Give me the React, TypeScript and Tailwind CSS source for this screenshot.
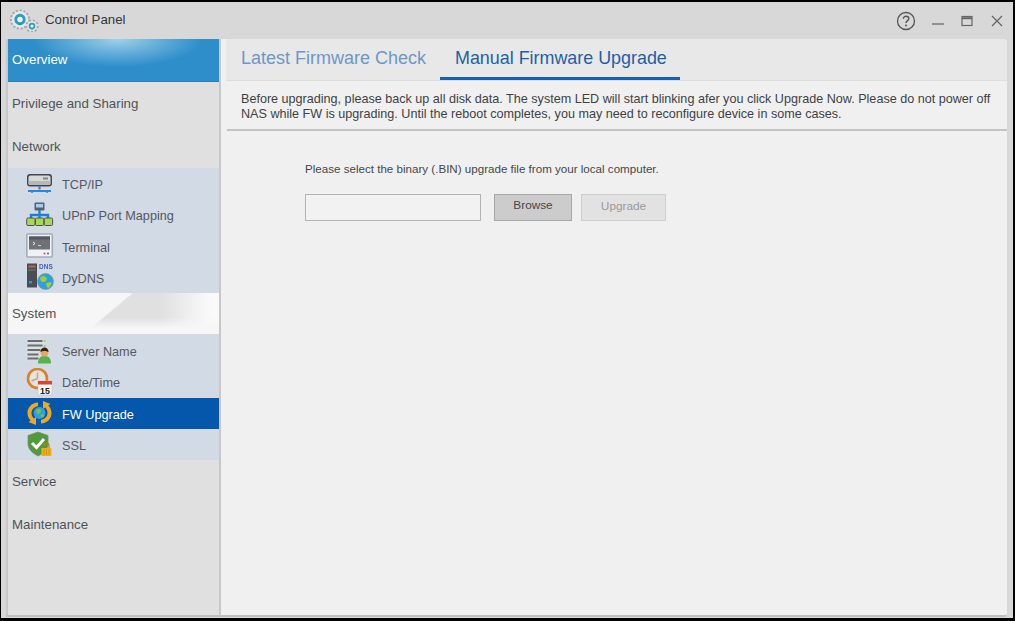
import React from "react";

const Gear = ({ cx, cy, r, hole }: { cx: number; cy: number; r: number; hole: number }) => (
  <g>
    <circle cx={cx} cy={cy} r={r} fill="#d8dadc" stroke="#a4a7aa" strokeWidth="2.2" strokeDasharray="2 1.8" />
    <circle cx={cx} cy={cy} r={r - 0.8} fill="#e6e8ea" />
    <circle cx={cx} cy={cy} r={hole} fill="#eef4f7" stroke="#2a9fc4" strokeWidth={hole * 0.7} />
    <circle cx={cx} cy={cy + hole + 0.6} r={hole * 0.25} fill="#4a5660" opacity="0.35" />
  </g>
);

const LogoIcon = () => (
  <svg width="30" height="24" viewBox="0 0 30 24" className="blur-[0.5px]">
    <Gear cx={11} cy={11.5} r={9} hole={4.2} />
    <Gear cx={23} cy={18} r={5.6} hole={2.5} />
  </svg>
);

const TcpIcon = () => (
  <svg width="28" height="26" viewBox="0 0 28 26" className="blur-[0.6px]">
    <rect x="1" y="3" width="25" height="12.5" rx="3" fill="#44484c" />
    <rect x="2.500" y="4.5" width="22" height="9.5" rx="2" fill="#d6d9d6" />
    <rect x="2.500" y="10" width="22" height="4" rx="1.5" fill="#b4b8b6" />
    <rect x="17" y="6.5" width="5" height="2" fill="#7f8488" />
    <path d="M13.5 15.5v3M2 20h23" stroke="#2f86d6" strokeWidth="2.2" />
    <path d="M6 20v2M21 20v2" stroke="#2f86d6" strokeWidth="1.5" />
  </svg>
);

const UpnpIcon = () => (
  <svg width="28" height="26" viewBox="0 0 28 26" className="blur-[0.6px]">
    <rect x="8.5" y="0.5" width="10" height="8" rx="1" fill="#5a6068" />
    <rect x="10" y="2" width="7" height="3.5" fill="#9fd0f0" />
    <path d="M13.5 8v5M5 17v-4h17v4M13.5 13v4" stroke="#1f7fd8" strokeWidth="2.4" fill="none" />
    <rect x="0.7" y="16" width="8.3" height="7.5" rx="1.2" fill="#a8d850" stroke="#4d5358" />
    <rect x="9.5" y="16" width="8.3" height="7.5" rx="1.2" fill="#a8d850" stroke="#4d5358" />
    <rect x="18.3" y="16" width="8.3" height="7.5" rx="1.2" fill="#a8d850" stroke="#4d5358" />
  </svg>
);

const TerminalIcon = () => (
  <svg width="28" height="26" viewBox="0 0 28 26" className="blur-[0.5px]">
    <rect x="0.8" y="1" width="25.5" height="23" rx="1" fill="#eef1f5" stroke="#a4acb8" strokeWidth="1.6" />
    <rect x="3" y="3.5" width="21" height="13" fill="#6e7276" />
    <rect x="3" y="3.5" width="21" height="3" fill="#54585c" />
    <path d="M7 9l2 1.5L7 12" stroke="#fff" strokeWidth="0.9" fill="none" />
    <path d="M12 12.5h3" stroke="#ddd" strokeWidth="0.9" />
    <circle cx="18.5" cy="20.5" r="1" fill="#d84a4a" />
    <circle cx="22" cy="20.500" r="1" fill="#3a62b8" />
  </svg>
);

const DnsIcon = () => (
  <svg width="28" height="28" viewBox="0 0 28 28" className="blur-[0.4px]">
    <rect x="1" y="0.5" width="10" height="24" fill="#4a4d52" />
    <rect x="2.5" y="2.5" width="7" height="2" fill="#b07050" />
    <rect x="2.5" y="6.5" width="7" height="1" fill="#7a7d82" />
    <rect x="3" y="18" width="3" height="2.5" fill="#2a9ae0" />
    <text x="13" y="6" fontSize="6.5" fontWeight="700" fill="#3a62c0" fontFamily="Liberation Sans, sans-serif">DNS</text>
    <circle cx="19.5" cy="18.5" r="8" fill="#2f9fe0" stroke="#8a9a9a" strokeWidth="0.8" />
    <path d="M14.5 14c3-2 5-1 6 1s-1 4-3 4-4-2-3-5zM20.5 20c2-1 5-1 5 0s-2 5-3 5-3-3-2-5z" fill="#9ccf3a" />
  </svg>
);

const ServerNameIcon = () => (
  <svg width="28" height="26" viewBox="0 0 28 26" className="blur-[0.4px]">
    <rect x="1" y="0.5" width="18" height="22" fill="#dcdfe2" />
    <path d="M1.5 3h15M1.5 7.5h15M1.5 12h13M1.500 16.5h11M1.5 20.5h11" stroke="#6a6e74" strokeWidth="1.8" />
    <circle cx="18.5" cy="3" r="1" fill="#8ccf60" />
    <circle cx="18.5" cy="8" r="1" fill="#8ccf60" />
    <path d="M12 25.5c0-5 2-7.500 6.500-7.500s6.500 2.500 6.500 7.500z" fill="#5ab04a" />
    <circle cx="18.5" cy="14.5" r="4" fill="#e8a868" />
    <path d="M14.5 14c0-3 2-4.500 4-4.500s4 1.500 4 4.500c-2-1.500-6-1.500-8 0z" fill="#3a1e10" />
  </svg>
);

const DateIcon = () => (
  <svg width="28" height="28" viewBox="0 0 28 28" className="blur-[0.4px]">
    <circle cx="11.5" cy="10.5" r="9.5" fill="#e8e4dc" stroke="#d9822b" strokeWidth="2.6" />
    <path d="M11.5 10.5V4.5M11.5 10.5l-6 2.5" stroke="#b4aca0" strokeWidth="1.6" />
    <rect x="12" y="13" width="14" height="14" fill="#f4f4f4" stroke="#bbb" strokeWidth="0.5" />
    <rect x="12" y="13" width="14" height="3.5" fill="#d8443a" />
    <text x="14" y="25.5" fontSize="9" fontWeight="700" fill="#222" fontFamily="Liberation Sans, sans-serif">15</text>
  </svg>
);

const FwIcon = () => (
  <svg width="28" height="26" viewBox="0 0 28 26" className="blur-[0.4px]">
    <path d="M12 2.500C5.500 3 1.500 7.500 1.500 13c0 3 1.300 5.800 3.200 7.600L2.500 22l7.500 3v-8l-2.200 1.500C6.300 17 5.500 15 5.500 13c0-3.500 2.800-6.200 6.500-6.700z" fill="#f0a820" />
    <path d="M15 23.500c6.500-.5 10.500-5 10.500-10.500 0-3-1.300-5.800-3.200-7.600L24.500 4 17 1v8l2.200-1.500c1.500 1.500 2.300 3.500 2.300 5.500 0 3.500-2.800 6.200-6.500 6.700z" fill="#f0a820" />
    <circle cx="13.5" cy="13" r="6" fill="#2f9fe0" />
    <path d="M10.500 9.500c2-1 4.500-1 4.500 1s-2 3.500-3 3.500-2.500-2.500-1.500-4.500zM14.500 15c1-1 3.500-1 3.500 0s-1 2.500-2 2.500-1.500-1.500-1.500-2.500z" fill="#7cc04a" />
  </svg>
);

const SslIcon = () => (
  <svg width="28" height="26" viewBox="0 0 28 26" className="blur-[0.4px]">
    <path d="M12 1l10 3.500v8c0 6-5 10-10 12.500C7 22.500 2 18.500 2 12.500v-8z" fill="#4f9a3a" stroke="#7d8a80" strokeWidth="0.8" />
    <path d="M6 12l4.500 4.500L18 8" stroke="#fff" strokeWidth="3" fill="none" />
    <path d="M18 17v-2.500a2.500 2.500 0 015 0V17" stroke="#b08020" strokeWidth="1.2" fill="none" />
    <rect x="15.5" y="17" width="10" height="8" fill="#efb020" />
    <path d="M18 18v6M20.500 18v6M23 18v6" stroke="#c98a10" strokeWidth="0.7" />
  </svg>
);

const Section = ({ label }: { label: string }) => (
  <div className="h-[43px] flex items-center pl-[4px] text-[13.3px] text-[#505458]">{label}</div>
);

const SubItem = ({ icon, label, active = false }: { icon: React.ReactNode; label: string; active?: boolean }) => (
  <div className={`h-[31.25px] flex items-center text-[12.7px] ${active ? "bg-[#0457ab] text-white" : "text-[#55595f]"}`}>
    <div className="w-[54px] pl-[18px] flex items-center justify-start h-full">{icon}</div>
    <span className="pt-[4px]">{label}</span>
  </div>
);

export default function App() {
  return (
    <div className="w-[1015px] h-[621px] bg-[#000] pt-[2px] pl-[1px] pr-[2px] pb-[3px] overflow-hidden" style={{ fontFamily: '"Liberation Sans", Arial, sans-serif' }}>
      <div className="h-full flex flex-col bg-[#d8d8d8]">
        <div className="h-[36px] shrink-0 flex items-center pl-[8px] pr-[9px]">
          <LogoIcon />
          <span className="ml-[6px] text-[13.3px] text-[#33363a]">Control Panel</span>
          <div className="ml-auto flex items-center text-[#4a4a4a] pt-[2px]">
            <svg width="20" height="20" viewBox="0 0 20 20" className="mr-[15px]">
              <circle cx="10" cy="10" r="8.5" fill="none" stroke="#555" strokeWidth="1.3" />
              <path d="M7.3 7.800c0-1.600 1.200-2.600 2.800-2.600s2.700 1 2.700 2.300c0 2.300-2.800 2-2.800 4.500" fill="none" stroke="#555" strokeWidth="1.4" />
              <circle cx="10" cy="14.5" r="1" fill="#555" />
            </svg>
            <svg width="14" height="14" viewBox="0 0 14 14" className="mr-[15px]">
              <path d="M1 10h12" stroke="#777" strokeWidth="1.5" />
            </svg>
            <svg width="14" height="14" viewBox="0 0 14 14" className="mr-[16px]">
              <rect x="2" y="2.5" width="10" height="9" fill="none" stroke="#666" strokeWidth="1.2" />
              <path d="M2 4.200h10" stroke="#666" strokeWidth="2" />
            </svg>
            <svg width="14" height="14" viewBox="0 0 14 14">
              <path d="M2 2l10 10M12 2L2 12" stroke="#666" strokeWidth="1.3" />
            </svg>
          </div>
        </div>
        <div className="flex-1 min-h-0 flex ml-[5px] mr-[6px] mb-[1px] mt-[1px] rounded-tr-[3px] rounded-br-[3px] overflow-hidden border-b-2 border-[#c0c0c0]">
          <aside className="w-[215px] shrink-0 flex flex-col bg-[#e0e0e0] border-l-2 border-r-2 border-[#c8c8c8]">
            <div className="h-[43px] flex items-center pl-[4px] text-[13.3px] text-white bg-[#2e8ec9] bg-[radial-gradient(ellipse_85px_28px_at_52%_0,#a2d0e8_0%,#5eabd8_55%,#2e8ec9_100%)] border-b border-[#2a7eb4]">Overview</div>
            <Section label="Privilege and Sharing" />
            <Section label="Network" />
            <div className="bg-[#d2dae6]">
              <SubItem icon={<TcpIcon />} label="TCP/IP" />
              <SubItem icon={<UpnpIcon />} label="UPnP Port Mapping" />
              <SubItem icon={<TerminalIcon />} label="Terminal" />
              <SubItem icon={<DnsIcon />} label="DyDNS" />
            </div>
            <div className="h-[42px] flex items-center pl-[4px] text-[13.3px] text-[#505458] bg-[linear-gradient(to_bottom,transparent_60%,#f6f6f6_85%),linear-gradient(to_right,transparent_72%,#fafafa_96%),linear-gradient(140deg,#f6f6f6_47.5%,#e0e0e0_48.5%)] border-b border-[#d8d8d8]">System</div>
            <div className="bg-[#d2dae6]">
              <SubItem icon={<ServerNameIcon />} label="Server Name" />
              <SubItem icon={<DateIcon />} label="Date/Time" />
              <SubItem icon={<FwIcon />} label="FW Upgrade" active />
              <SubItem icon={<SslIcon />} label="SSL" />
            </div>
            <Section label="Service" />
            <Section label="Maintenance" />
          </aside>
          <main className="flex-1 min-w-0 bg-[#f0f0f0] flex flex-col">
            <div className="h-[42px] shrink-0 bg-[#e8e8e8] ml-[5px] flex items-end border-b border-[#dedede]">
              <div className="h-full w-[214px] pl-[15px] pt-[6px] text-[18px] text-[#6d97c8]">Latest Firmware Check</div>
              <div className="h-[42px] w-[240px] pl-[15px] pt-[7px] text-[17.9px] text-[#1d5fa8] border-b-[3px] border-[#1560b0]">Manual Firmware Upgrade</div>
            </div>
            <div className="h-[50px] shrink-0 ml-[6px] pl-[14px] pt-[11px] text-[12.6px] leading-[14.5px] text-[#3e4246] border-b-2 border-[#c4c4c4]">
              Before upgrading, please back up all disk data. The system LED will start blinking afer you click Upgrade Now. Please do not power off
              <br />
              NAS while FW is upgrading. Until the reboot completes, you may need to reconfigure device in some cases.
            </div>
            <div className="pl-[84px] pt-[31px]">
              <div className="text-[11.6px] leading-[14px] text-[#44484c]">Please select the binary (.BIN) upgrade file from your local computer.</div>
              <div className="flex mt-[18px] items-stretch h-[27px]">
                <div className="w-[176px] bg-[#f2f2f2] border border-[#b4b4b4]" />
                <button className="ml-[13px] w-[78px] bg-[#cccccc] border border-[#a8a8a8] pb-[3px] text-[11.8px] text-[#44484c]">Browse</button>
                <button className="ml-[9px] w-[85px] bg-[#e2e2e2] border border-[#cfcfcf] pb-[2px] text-[11.8px] text-[#9a9a9a]">Upgrade</button>
              </div>
            </div>
          </main>
        </div>
      </div>
    </div>
  );
}
